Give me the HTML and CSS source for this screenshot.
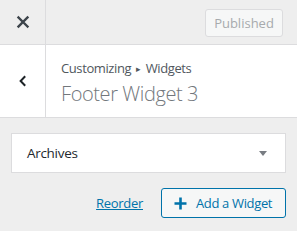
FILE: index.html
```html
<!DOCTYPE html>
<html>
<head>
<meta charset="utf-8">
<link rel="stylesheet" href="styles.css">
</head>
<body>
<div class="panel">
  <div class="topbar">
    <div class="close">
      <svg width="14" height="14" viewBox="0 0 14 14"><path d="M2.5 2.5 L11.5 11.5 M11.5 2.5 L2.5 11.5" stroke="#3c434a" stroke-width="2.4" stroke-linecap="square" fill="none"/></svg>
    </div>
    <div class="top-actions">
      <button class="published">Published</button>
    </div>
  </div>
  <div class="section-head">
    <div class="back">
      <svg width="10" height="14" viewBox="0 0 10 14"><path d="M7.2 2.2 L2.6 7 L7.2 11.8" stroke="#1d2327" stroke-width="2" fill="none"/></svg>
    </div>
    <div class="titles">
      <div class="crumbs">Customizing <span class="sep">▸</span> Widgets</div>
      <div class="title">Footer Widget 3</div>
    </div>
  </div>
  <div class="content">
    <div class="widget">
      <span class="widget-name">Archives</span>
      <span class="arrow"></span>
    </div>
    <div class="row">
      <a class="reorder" href="#">Reorder</a>
      <button class="add">
        <svg width="13" height="13" viewBox="0 0 13 13"><path d="M6.5 0.5 V12.5 M0.5 6.5 H12.5" stroke="#0073aa" stroke-width="2.6" fill="none"/></svg>
        <span>Add a Widget</span>
      </button>
    </div>
  </div>
</div>
</body>
</html>
```

FILE: styles.css
```css
html, body {
  margin: 0;
  padding: 0;
  background: #eeeeee;
}
body {
  font-family: "Open Sans", "Noto Sans", sans-serif;
  width: 297px;
  height: 231px;
  overflow: hidden;
}
.panel {
  display: flex;
  flex-direction: column;
}
.topbar {
  display: flex;
  height: 44px;
  border-bottom: 1px solid #dcdcde;
  background: #eeeeee;
}
.close {
  width: 45px;
  border-right: 1px solid #dcdcde;
  display: flex;
  align-items: center;
  justify-content: center;
}
.top-actions {
  flex: 1;
  display: flex;
  align-items: center;
  justify-content: flex-end;
  padding-right: 14px;
}
.published {
  font-family: inherit;
  font-size: 13px;
  color: #a7aaad;
  background: #f6f7f7;
  border: 1px solid #dcdcde;
  border-radius: 3px;
  width: 78px;
  height: 28px;
  padding: 0;
  margin-top: 2px;
}
.section-head {
  display: flex;
  height: 72px;
  background: #ffffff;
  border-bottom: 1px solid #dcdcde;
}
.back {
  width: 45px;
  border-right: 1px solid #dcdcde;
  display: flex;
  align-items: center;
  justify-content: center;
}
.titles {
  padding: 14px 0 0 15px;
}
.crumbs {
  font-size: 13px;
  line-height: 18px;
  color: #50575e;
  letter-spacing: -0.4px;
}
.sep {
  font-size: 9px;
  position: relative;
  top: -1px;
  margin: 0 2px;
}
.title {
  font-size: 20px;
  font-weight: 300;
  line-height: 28px;
  color: #72777c;
  margin-top: 1px;
  letter-spacing: -0.4px;
}
.content {
  padding: 15px 11px 0 11px;
}
.widget {
  height: 38px;
  background: #ffffff;
  border: 1px solid #dcdcde;
  display: flex;
  align-items: center;
  justify-content: space-between;
  padding: 0 18px 0 15px;
}
.widget-name {
  font-size: 13.5px;
  font-weight: 400;
  color: #23282d;
  letter-spacing: -0.3px;
}
.arrow {
  width: 0;
  height: 0;
  border-left: 4px solid transparent;
  border-right: 4px solid transparent;
  border-top: 5px solid #787c82;
}
.row {
  display: flex;
  justify-content: flex-end;
  align-items: center;
  gap: 18px;
  margin-top: 15px;
}
.reorder {
  font-size: 13px;
  color: #0073aa;
  text-decoration: underline;
  letter-spacing: -0.3px;
}
.add {
  font-family: inherit;
  display: flex;
  align-items: center;
  gap: 9px;
  height: 30px;
  width: 125px;
  padding: 0 0 0 12px;
  background: #f6f7f7;
  border: 1px solid #0073aa;
  border-radius: 3px;
  color: #0073aa;
  font-size: 13px;
  letter-spacing: -0.35px;
}
```
